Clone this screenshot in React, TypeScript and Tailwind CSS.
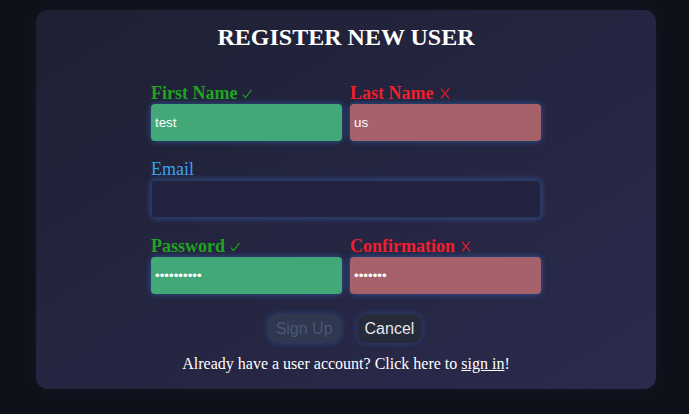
import { useState } from "react";

const serif = "font-['Liberation_Serif','Times_New_Roman',serif]";
const sans = "font-['Liberation_Sans',Arial,sans-serif]";

function Mark({ ok }: { ok: boolean }) {
  return ok ? (
    <svg className="ml-[5px] inline-block align-[0px]" width="10" height="10" viewBox="0 0 10 10" fill="none">
      <path d="M0.8 5.6 L3.6 8.6 L9.4 0.8" stroke="currentColor" strokeWidth="1.1" />
    </svg>
  ) : (
    <svg className="ml-[6px] inline-block align-[0px]" width="10" height="11" viewBox="0 0 10 11" fill="none">
      <path d="M1 0.6 L9 10.4 M9 0.6 L1 10.4" stroke="currentColor" strokeWidth="1.1" />
    </svg>
  );
}

function Label({ text, ok }: { text: string; ok: boolean }) {
  return (
    <label
      className={`${serif} block h-[21px] text-[18px] leading-[20px] font-bold ${
        ok ? "text-[#1fa51f]" : "text-[#f01f2d]"
      }`}
    >
      {text}
      <Mark ok={ok} />
    </label>
  );
}

export default function App() {
  const [first, setFirst] = useState("test");
  const [last, setLast] = useState("us");
  const [email, setEmail] = useState("");
  const [pass, setPass] = useState("0123456789");
  const [conf, setConf] = useState("1234567");

  const input =
    `${sans} block w-full h-[37px] rounded-[4px] px-[4px] text-[13.33px] text-white outline-none shadow-[0_0_6px_rgba(56,132,230,0.55)]`;

  return (
    <div className="min-h-screen h-[414px] bg-[#0e1119] pt-[10px] pl-[36px] pr-[33px]">
      <div className="h-[379px] rounded-[12px] bg-gradient-to-br from-[#1e2033] to-[#2b2a4e] pt-[14px] shadow-[0_0_20px_rgba(30,36,60,0.35)]">
        <h1 className={`${serif} text-center text-[24px] leading-[27px] font-bold text-white`}>
          REGISTER NEW USER
        </h1>
        <form className="mx-auto mt-[32px] w-[390px]" onSubmit={(e) => e.preventDefault()}>
          <div className="grid grid-cols-2 gap-x-[8px]">
            <div>
              <Label text="First Name" ok />
              <input className={`${input} bg-[#42a878]`} value={first} onChange={(e) => setFirst(e.target.value)} />
            </div>
            <div>
              <Label text="Last Name" ok={false} />
              <input className={`${input} bg-[#a6616b]`} value={last} onChange={(e) => setLast(e.target.value)} />
            </div>
          </div>

          <label className={`${serif} mt-[18px] block h-[21px] text-[18px] leading-[20px] text-[#3aa2ee]`}>
            Email
          </label>
          <input
            className={`${input} h-[38px] border border-[#2c3656] bg-[#222341]`}
            value={email}
            onChange={(e) => setEmail(e.target.value)}
          />

          <div className="mt-[18px] grid grid-cols-2 gap-x-[8px]">
            <div>
              <Label text="Password" ok />
              <input
                type="password"
                className={`${input} bg-[#42a878]`}
                value={pass}
                onChange={(e) => setPass(e.target.value)}
              />
            </div>
            <div>
              <Label text="Confirmation" ok={false} />
              <input
                type="password"
                className={`${input} bg-[#a6616b]`}
                value={conf}
                onChange={(e) => setConf(e.target.value)}
              />
            </div>
          </div>

          <div className="mt-[20px] flex justify-center gap-[16px] pr-[2px]">
            <button
              disabled
              className={`${sans} h-[29px] rounded-[10px] bg-[#2e3851] px-[8px] text-[16px] text-[#4b5672] shadow-[0_0_6px_rgba(56,132,230,0.35)]`}
            >
              Sign Up
            </button>
            <button
              type="button"
              className={`${sans} h-[29px] rounded-[10px] bg-[#252b39] px-[8px] text-[16px] text-[#e5e7eb] shadow-[0_0_6px_rgba(56,132,230,0.35)]`}
            >
              Cancel
            </button>
          </div>
        </form>
        <p className={`${serif} mt-[12px] text-center text-[16px] leading-[18px] text-white`}>
          Already have a user account? Click here to <a href="#" className="underline">sign in</a>!
        </p>
      </div>
    </div>
  );
}
